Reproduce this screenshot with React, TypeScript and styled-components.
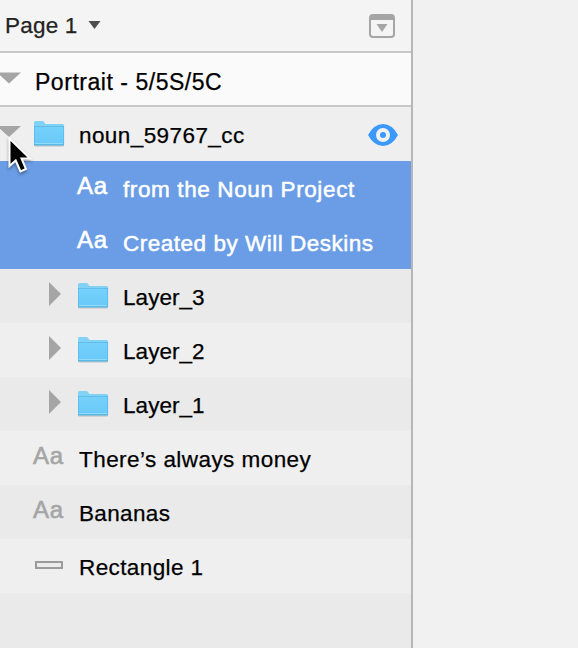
import React from 'react';
import styled, { createGlobalStyle } from 'styled-components';

const GlobalStyle = createGlobalStyle`
  body { margin: 0; background: #f1f1f1; overflow: hidden; }
  * { box-sizing: border-box; }
`;

const Screen = styled.div`
  display: flex;
  width: 578px;
  height: 648px;
  background: #f1f1f1;
  font: 22.5px/54px "Liberation Sans", Arial, sans-serif;
  color: #000;
  cursor: default;
`;

const Sidebar = styled.aside`
  position: relative;
  display: flex;
  flex-direction: column;
  width: 413px;
  height: 648px;
  border-right: 2px solid #b7b7b7;
  background: #eaeaea;
  overflow: hidden;
`;

const PageBar = styled.header`
  display: flex;
  align-items: center;
  height: 53px;
  padding-left: 5px;
  padding-right: 16px;
  border-bottom: 2px solid #c8c8c8;
  background: #f4f4f4;
  color: #222;
`;

const PageArrow = styled.svg`
  margin-left: 11px;
  margin-top: -1px;
`;

const PanelIcon = styled.svg`
  margin-left: auto;
`;

const ArtboardRow = styled.div`
  display: flex;
  align-items: center;
  height: 54px;
  padding-left: 35px;
  border-bottom: 2px solid #c8c8c8;
  background: #fafafa;
`;

const ArtboardArrow = styled.svg`
  margin-left: -38px;
  margin-right: 14px;
  margin-top: -3px;
  flex: none;
`;

const Row = styled.div<{ $bg: string; $indent: number; $selected?: boolean }>`
  display: flex;
  align-items: center;
  height: 54px;
  flex: none;
  padding-left: ${p => p.$indent}px;
  padding-right: 13px;
  background: ${p => p.$bg};
  color: ${p => (p.$selected ? '#fff' : '#000')};
`;

const Disclosure = styled.span<{ $open: boolean }>`
  display: flex;
  width: 28px;
  height: 54px;
  margin-left: ${p => (p.$open ? -38 : -29)}px;
  margin-right: ${p => (p.$open ? 10 : 1)}px;
  flex: none;
`;

const IconSlot = styled.span`
  display: flex;
  align-items: center;
  width: 45px;
  height: 54px;
  flex: none;
`;

const TypeGlyph = styled.span<{ $selected?: boolean }>`
  display: block;
  margin-left: -1px;
  margin-top: -5px;
  font-size: 24px;
  letter-spacing: 0.7px;
  color: ${p => (p.$selected ? '#fff' : '#a5a5a5')};
  -webkit-text-stroke: 0.6px currentColor;
`;

const Label = styled.span<{ $width: number; $spacing: number; $bold?: boolean }>`
  display: block;
  flex: none;
  height: 54px;
  width: ${p => p.$width}px;
  padding-top: 1px;
  letter-spacing: ${p => p.$spacing}px;
  white-space: nowrap;
  -webkit-text-stroke: ${p => (p.$bold ? 0.5 : 0.25)}px currentColor;
`;

const LayerLabel = styled(Label)`
  padding-top: 2px;
`;

const PageLabel = styled(Label)`
  margin-top: -1px;
`;

const ArtboardLabel = styled(Label)`
  padding-top: 3px;
  font-size: 23px;
`;

const EyeIcon = styled.svg`
  margin-left: auto;
  margin-top: 2px;
`;

const Cursor = styled.svg`
  position: absolute;
  left: 2px;
  top: 132px;
  filter: drop-shadow(0 2px 1.5px rgba(0, 0, 0, 0.35));
`;

const FolderIcon = () => (
  <svg width="32" height="54" viewBox="0 0 32 54">
    <defs>
      <linearGradient id="folder" x1="0" y1="0" x2="0" y2="1">
        <stop offset="0" stopColor="#76d2fb" />
        <stop offset="1" stopColor="#69c8f8" />
      </linearGradient>
    </defs>
    <path d="M.5 39h29" stroke="#b9bec1" strokeWidth="1" />
    <path d="M0 15.5Q0 14 1.5 14h7q1 0 1.600 1l.7 1.300q.4.7 1.300.7h16.400q1.500 0 1.500 1.500V38H0z" fill="#82d2f6" />
    <path d="M0 19h30v19H0z" fill="url(#folder)" />
    <path d="M0 19.500h30" stroke="#62bde8" strokeWidth="1" />
    <path d="M.4 19v19M29.600 19v19" stroke="#58b9e8" strokeWidth=".8" />
    <path d="M1 36.500h28" stroke="#8fdcfd" strokeWidth="1" />
    <path d="M0 38h30" stroke="#4da9d3" strokeWidth="1" />
  </svg>
);

const RectangleIcon = () => (
  <svg width="30" height="54" viewBox="0 0 30 54">
    <rect x="2" y="23" width="26" height="6" fill="#ececec" stroke="#9b9b9b" strokeWidth="2" />
  </svg>
);

const DownTriangle = () => (
  <svg width="28" height="54" viewBox="0 0 28 54">
    <path d="M1 19h24L13 30z" fill="#a5a5a5" />
  </svg>
);

const RightTriangle = () => (
  <svg width="28" height="54" viewBox="0 0 28 54">
    <path d="M0 13l12 12L0 37z" fill="#a5a5a5" />
  </svg>
);

type Layer = {
  name: string;
  kind: 'folder' | 'type' | 'rectangle';
  indent: number;
  width: number;
  spacing: number;
  disclosure?: 'open' | 'closed';
  selected?: boolean;
  visibleIcon?: boolean;
};

const layers: Layer[] = [
  { name: 'noun_59767_cc', kind: 'folder', indent: 34, width: 170, spacing: 0.42, disclosure: 'open', visibleIcon: true },
  { name: 'from the Noun Project', kind: 'type', indent: 78, width: 240, spacing: 0.62, selected: true },
  { name: 'Created by Will Deskins', kind: 'type', indent: 78, width: 255, spacing: 0.51, selected: true },
  { name: 'Layer_3', kind: 'folder', indent: 78, width: 90, spacing: 0.05, disclosure: 'closed' },
  { name: 'Layer_2', kind: 'folder', indent: 78, width: 90, spacing: 0.05, disclosure: 'closed' },
  { name: 'Layer_1', kind: 'folder', indent: 78, width: 90, spacing: 0.05, disclosure: 'closed' },
  { name: 'There’s always money', kind: 'type', indent: 34, width: 240, spacing: 0.44 },
  { name: 'Bananas', kind: 'type', indent: 34, width: 100, spacing: 0.35 },
  { name: 'Rectangle 1', kind: 'rectangle', indent: 34, width: 130, spacing: 0.4 },
];

const rowColor = (layer: Layer, index: number) =>
  layer.selected ? '#6a9de5' : index % 2 ? '#eaeaea' : '#efefef';

export default function App() {
  return (
    <Screen>
      <GlobalStyle />
      <Sidebar>
        <PageBar>
          <PageLabel $width={72} $spacing={0.2}>Page 1</PageLabel>
          <PageArrow width="14" height="10" viewBox="0 0 14 10">
            <path d="M.5 1h12L6.5 9z" fill="#4d4d4d" />
          </PageArrow>
          <PanelIcon width="26" height="24" viewBox="0 0 26 24">
            <rect x="1" y="1" width="24" height="22" rx="3" fill="none" stroke="#a5a5a5" strokeWidth="2" />
            <path d="M1 3q0-2 2-2h20q2 0 2 2v3H1zM7.5 10h11L13 18z" fill="#a5a5a5" />
          </PanelIcon>
        </PageBar>
        <ArtboardRow>
          <ArtboardArrow width="24" height="12" viewBox="0 0 24 12">
            <path d="M0 .5h24l-12 11z" fill="#a5a5a5" />
          </ArtboardArrow>
          <ArtboardLabel $width={200} $spacing={0.53}>Portrait - 5/5S/5C</ArtboardLabel>
        </ArtboardRow>
        {layers.map((layer, index) => (
          <Row
            key={layer.name}
            $bg={rowColor(layer, index)}
            $indent={layer.indent}
            $selected={layer.selected}
          >
            {layer.disclosure && (
              <Disclosure $open={layer.disclosure === 'open'}>
                {layer.disclosure === 'open' ? <DownTriangle /> : <RightTriangle />}
              </Disclosure>
            )}
            <IconSlot>
              {layer.kind === 'folder' && <FolderIcon />}
              {layer.kind === 'type' && <TypeGlyph $selected={layer.selected}>Aa</TypeGlyph>}
              {layer.kind === 'rectangle' && <RectangleIcon />}
            </IconSlot>
            <LayerLabel $width={layer.width} $spacing={layer.spacing} $bold={layer.selected}>{layer.name}</LayerLabel>
            {layer.visibleIcon && (
              <EyeIcon width="30" height="22" viewBox="0 0 30 22">
                <path d="M0 11Q6 0 15 0t15 11q-6 11-15 11T0 11z" fill="#3b99fc" />
                <circle cx="15" cy="11" r="5" fill="none" stroke="#f1f1f1" strokeWidth="4" />
              </EyeIcon>
            )}
          </Row>
        ))}
        <Cursor width="34" height="44" viewBox="0 0 34 44">
          <path d="M7.500 6.500v27.500l6.200-5.500 4.800 11 5.500-2.500-4.500-10.500h8.500z" fill="#000" stroke="#fff" strokeWidth="2" />
        </Cursor>
      </Sidebar>
    </Screen>
  );
}
